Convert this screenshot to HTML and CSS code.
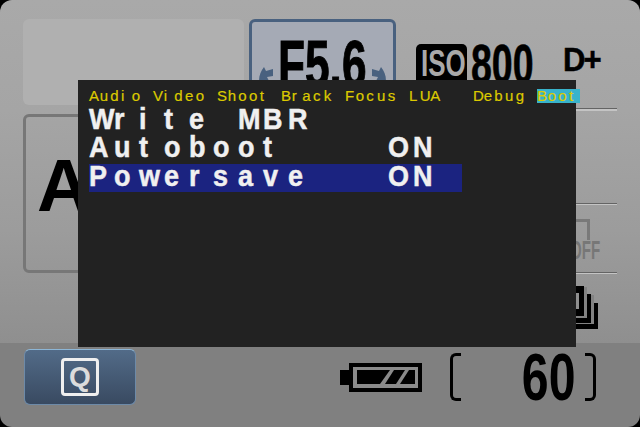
FILE: index.html
```html
<!DOCTYPE html>
<html lang="en">
<head>
<meta charset="utf-8">
<title>Camera display</title>
<link rel="stylesheet" href="styles.css">
</head>
<body>
<div class="screen">
  <div class="main">
    <div class="blank"></div>
    <div class="aperture">
      <svg class="arrow" viewBox="0 0 16 16"><path d="M1 16 C1 10 3 6 6 2 L8 6 L15 4 L15 11 L9 12 L11 16 Z"/></svg>
      <div class="fnum"><span class="squeeze">F5.6</span></div>
      <svg class="arrow" viewBox="0 0 16 16"><path d="M15 16 C15 10 13 6 10 2 L8 6 L1 4 L1 11 L7 12 L5 16 Z"/></svg>
    </div>
    <div class="stats">
      <div class="iso"><span class="squeeze">ISO</span></div>
      <div class="isoval"><span class="squeeze">800</span></div>
      <div class="dplus">D+</div>
    </div>
    <div class="mode"><span>A</span></div>
    <div class="side">
      <div class="rule"></div>
      <div class="gap-a"></div>
      <div class="rule thin"></div>
      <div class="gap-b">
        <div class="offbox"></div>
        <div class="offtext"><span class="squeeze">OFF</span></div>
      </div>
      <div class="rule thin"></div>
      <svg class="stack" width="48" height="43" viewBox="0 0 48 43">
        <path d="M44 17 H48 V43 H0 V38 H44 Z" fill="#000"/>
        <path d="M37 8 H41 V37 H0 V32 H37 Z" fill="#000"/>
        <path d="M0 0 H34 V30 H0 Z" fill="#000"/>
        <path d="M0 7 H29 V23 H0 Z" fill="#8f8f8f"/>
        <path d="M34 1 H37 V32 H0 V30 H34 Z M41 9 H44 V38 H0 V37 H41 Z" fill="#828282"/>
      </svg>
    </div>
  </div>
  <div class="bar">
    <div class="qbtn"><div class="qbox">Q</div></div>
    <svg class="battery" width="82" height="29" viewBox="0 0 82 29">
      <path d="M0 7 H9 V0 H82 V29 H9 V22 H0 Z" fill="#000"/>
      <path d="M13 4 H78 V25 H13 Z" fill="#8a8a8a"/>
      <path d="M17 7 H50 L40 21 H17 Z" fill="#000"/>
      <path d="M54 7 H65 L56 21 H45 Z" fill="#000"/>
      <path d="M69 7 H75 V21 H60 Z" fill="#000"/>
    </svg>
    <div class="count">
      <div class="bracket"></div>
      <div class="shots"><span class="squeeze">60</span></div>
      <div class="bracket right"></div>
    </div>
  </div>

  <div class="menu">
    <div class="tabs">
      <div class="tab"><span class="s">A</span><span class="s">u</span><span class="s">d</span><span class="s">i</span><span class="s">o</span></div>
      <div class="tab"><span class="s">V</span><span class="s">i</span><span class="s">d</span><span class="s">e</span><span class="s">o</span></div>
      <div class="tab"><span class="s">S</span><span class="s">h</span><span class="s">o</span><span class="s">o</span><span class="s">t</span></div>
      <div class="tab"><span class="s">B</span><span class="s">r</span><span class="s">a</span><span class="s">c</span><span class="s">k</span></div>
      <div class="tab"><span class="s">F</span><span class="s">o</span><span class="s">c</span><span class="s">u</span><span class="s">s</span></div>
      <div class="tab"><span class="s">L</span><span class="s">U</span><span class="s">A</span></div>
      <div class="tab"><span class="s">D</span><span class="s">e</span><span class="s">b</span><span class="s">u</span><span class="s">g</span></div>
      <div class="tab active"><span class="s">B</span><span class="s">o</span><span class="s">o</span><span class="s">t</span></div>
    </div>
    <div class="row">
      <div class="label"><span class="c">W</span><span class="c">r</span><span class="c">i</span><span class="c">t</span><span class="c">e</span><span class="c"> </span><span class="c">M</span><span class="c">B</span><span class="c">R</span></div>
    </div>
    <div class="row">
      <div class="label"><span class="c">A</span><span class="c">u</span><span class="c">t</span><span class="c">o</span><span class="c">b</span><span class="c">o</span><span class="c">o</span><span class="c">t</span></div>
      <div class="value"><span class="c">O</span><span class="c">N</span></div>
    </div>
    <div class="row selected">
      <div class="label"><span class="c">P</span><span class="c">o</span><span class="c">w</span><span class="c">e</span><span class="c">r</span><span class="c">s</span><span class="c">a</span><span class="c">v</span><span class="c">e</span></div>
      <div class="value"><span class="c">O</span><span class="c">N</span></div>
    </div>
  </div>
</div>
</body>
</html>
```
FILE: styles.css
```css
* { box-sizing: border-box; }
html, body { margin: 0; padding: 0; background: #000; }
body { width: 640px; height: 427px; overflow: hidden; font-family: "Liberation Sans", Arial, sans-serif; }

.screen {
  position: relative;
  width: 640px;
  height: 427px;
  border-radius: 12px;
  overflow: hidden;
  display: flex;
  flex-direction: column;
}

.squeeze { display: inline-block; white-space: nowrap; transform-origin: left top; }

/* upper panel */
.main {
  height: 343px;
  padding: 19px 0 0 23px;
  background: linear-gradient(#a9a9a9 0, #a5a5a5 110px, #9c9c9c 230px, #8f8f8f 343px);
  display: grid;
  grid-template-columns: 221px 147px 1fr;
  grid-template-rows: 86px 1fr;
  column-gap: 5px;
  row-gap: 3px;
}
.blank { background: #b0b0b0; border-radius: 6px; }

.aperture {
  background: #a5aab5;
  border: 3px solid #49617f;
  border-radius: 6px;
  display: flex;
  align-items: flex-start;
  padding-left: 6px;
  overflow: hidden;
}
.arrow { width: 16px; height: 16px; margin-top: 43px; fill: #49617f; flex: none; }
.fnum { width: 89px; margin: 0 4px 0 4px; height: 80px; flex: none; }
.fnum .squeeze {
  font: bold 66px/66px "Liberation Sans", Arial, sans-serif;
  color: #000;
  -webkit-text-stroke: 1px #000;
  transform: scaleX(.67);
  margin-top: 9px;
}

.stats { display: flex; align-items: flex-start; padding-left: 15px; }
.iso {
  width: 51px;
  height: 42px;
  margin-top: 25px;
  flex: none;
  background: #000;
  border-radius: 5px;
  color: #a9a9a9;
  padding-left: 5px;
}
.iso .squeeze { font: bold 37px/37px "Liberation Sans", Arial, sans-serif; transform: scaleX(.7); margin-top: 1px; }
.isoval { width: 63px; margin-left: 4px; flex: none; color: #000; }
.isoval .squeeze {
  font: bold 56px/56px "Liberation Sans", Arial, sans-serif;
  -webkit-text-stroke: .6px #000;
  transform: scaleX(.67);
  margin-top: 17px;
}
.dplus {
  margin: 24px 0 0 29px;
  font: bold 33px/34px "Liberation Sans", Arial, sans-serif;
  letter-spacing: -2px;
  color: #000;
  -webkit-text-stroke: .5px #000;
  transform: scaleX(.94);
  transform-origin: left top;
}

.mode {
  grid-column: 1;
  grid-row: 2;
  margin-top: 6px;
  height: 159px;
  border: 3px solid #777;
  border-radius: 6px;
  padding: 32px 0 0 11px;
}
.mode span { font: bold 74px/74px "Liberation Sans", Arial, sans-serif; color: #000; }

.side {
  grid-column: 2 / 4;
  grid-row: 2;
  margin-right: 23px;
  display: flex;
  flex-direction: column;
  align-items: stretch;
  align-self: start;
}
.rule { height: 3px; background: linear-gradient(#646464 0, #646464 1px, #c4c4c4 1px); flex: none; }
.rule.thin { height: 2px; }
.gap-a { height: 92px; }
.gap-b { height: 67px; display: flex; flex-direction: column; align-items: flex-end; padding-top: 14px; }
.offbox { width: 30px; height: 21px; border-top: 3px solid #797979; border-right: 3px solid #797979; margin-right: 27px; }
.offtext { width: 30px; height: 20px; color: #777; margin-right: 17px; }
.offtext .squeeze { font: bold 26px/20px "Liberation Sans", Arial, sans-serif; transform: scaleX(.58); }
.stack { align-self: flex-end; margin: 12px 19px 0 0; flex: none; }

/* bottom bar */
.bar {
  height: 84px;
  background: #808080;
  display: flex;
  align-items: flex-start;
  padding: 6px 0 0 24px;
}
.qbtn {
  width: 112px;
  height: 56px;
  flex: none;
  border-radius: 6px;
  border: 1px solid #6d8aa8;
  border-top-color: #8db6d6;
  background: linear-gradient(#526b88, #394a61);
  display: flex;
  align-items: center;
  justify-content: center;
}
.qbox {
  width: 38px;
  height: 38px;
  border: 3px solid #efefef;
  border-radius: 4px;
  color: #dcdcdc;
  font: bold 28px/32px "Liberation Sans", Arial, sans-serif;
  text-align: center;
}
.battery { flex: none; margin: 14px 0 0 204px; }
.count { display: flex; width: 146px; margin-left: 28px; flex: none; padding-top: 4px; }
.bracket {
  width: 11px;
  height: 48px;
  flex: none;
  border: 3px solid #000;
  border-right: 0;
  border-radius: 6px 0 0 6px;
}
.bracket.right { border: 3px solid #000; border-left: 0; border-radius: 0 6px 6px 0; margin-left: 9px; }
.shots { margin-left: auto; width: 52px; color: #000; }
.shots .squeeze { font: bold 67px/48px "Liberation Sans", Arial, sans-serif; transform: scaleX(.72) translateX(-3px); }

/* overlay menu */
.menu {
  position: absolute;
  left: 78px;
  top: 80px;
  width: 498px;
  height: 267px;
  background: #222;
  padding: 9px 0 0 11px;
}
.tabs { display: flex; height: 18px; color: #dcca00; font-size: 15px; line-height: 14px; -webkit-text-stroke: .2px #dcca00; }
.tab { flex: 0 0 64px; height: 14px; white-space: nowrap; }
.tab.active { flex-basis: 42.67px; background: #38b3cb; }
.s { display: inline-block; width: 10.667px; }
.row {
  width: 373.3px;
  height: 28.44px;
  display: flex;
  color: #f0f0f0;
  -webkit-text-stroke: .5px #f0f0f0;
  font-size: 30px;
  font-weight: bold;
  line-height: 24px;
  white-space: pre;
}
.row.selected { background: #1b2380; }
.label { flex: 0 0 298.67px; }
.c { display: inline-block; width: 24.89px; transform: scaleX(.9); transform-origin: left top; }
```
